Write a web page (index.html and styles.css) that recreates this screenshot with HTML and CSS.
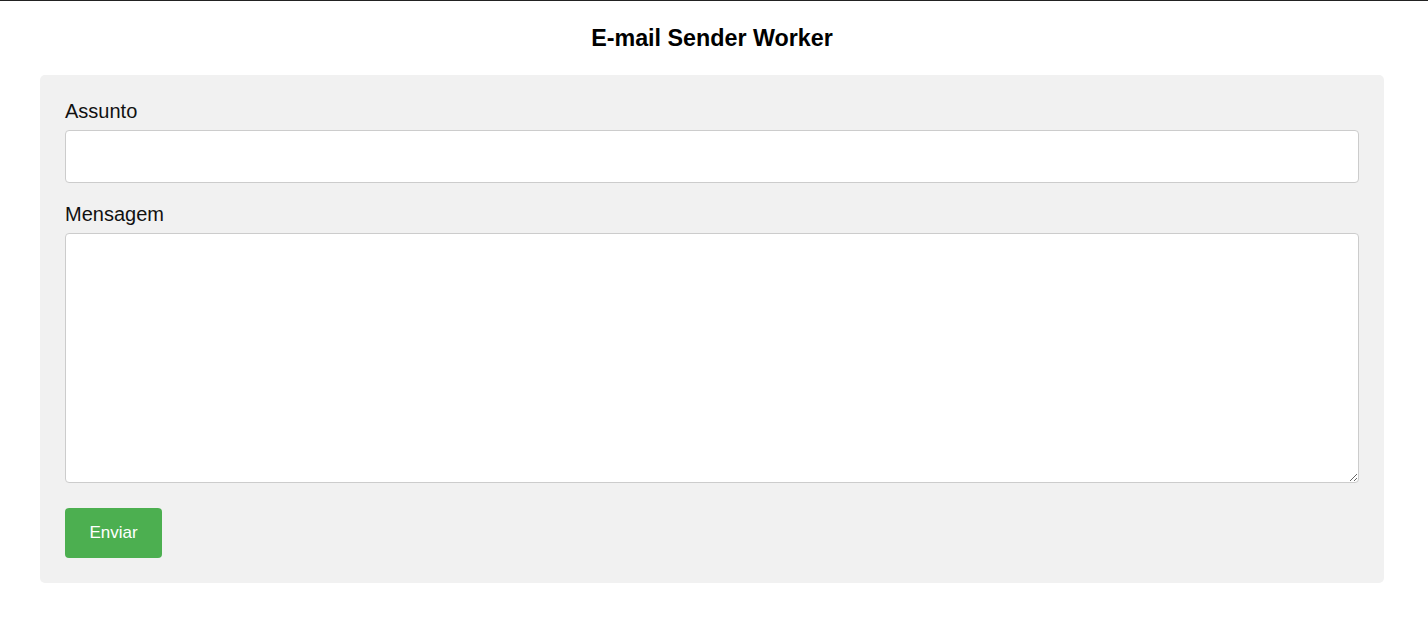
FILE: index.html
```html
<!DOCTYPE html>
<html lang="pt">
<head>
<meta charset="utf-8">
<title>E-mail Sender Worker</title>
<link rel="stylesheet" href="styles.css">
</head>
<body>
<h2 class="title">E-mail Sender Worker</h2>
<form class="card">
  <label class="label" for="assunto">Assunto</label>
  <input class="field field-input" id="assunto" type="text">
  <label class="label" for="mensagem">Mensagem</label>
  <textarea class="field field-area" id="mensagem"></textarea>
  <button class="btn" type="button">Enviar</button>
</form>
</body>
</html>
```
FILE: styles.css
```css
html, body {
  margin: 0;
  padding: 0;
  background: #ffffff;
}
body {
  border-top: 1px solid #222222;
  padding: 0 44px 0 40px;
  font-family: "Liberation Sans", Arial, sans-serif;
  color: #111111;
}
.title {
  margin: 24px 0 23px;
  font-size: 23.3px;
  line-height: 27px;
  font-weight: bold;
  text-align: center;
  color: #000000;
}
.card {
  display: flex;
  flex-direction: column;
  align-items: flex-start;
  background: #f1f1f1;
  border-radius: 5px;
  padding: 25px;
}
.label {
  font-size: 20px;
  line-height: 23px;
  margin-bottom: 7px;
}
.field {
  box-sizing: border-box;
  width: 100%;
  border: 1px solid #cccccc;
  border-radius: 4px;
  background: #ffffff;
  font-family: "Liberation Sans", Arial, sans-serif;
  font-size: 16px;
  margin: 0;
}
.field-input {
  height: 53px;
  margin-bottom: 20px;
}
.field-area {
  height: 250px;
  margin-bottom: 25px;
  resize: both;
}
.btn {
  width: 97px;
  height: 50px;
  background: #4caf50;
  color: #ffffff;
  border: none;
  border-radius: 4px;
  font-family: "Liberation Sans", Arial, sans-serif;
  font-size: 17px;
  padding: 0;
}
```
